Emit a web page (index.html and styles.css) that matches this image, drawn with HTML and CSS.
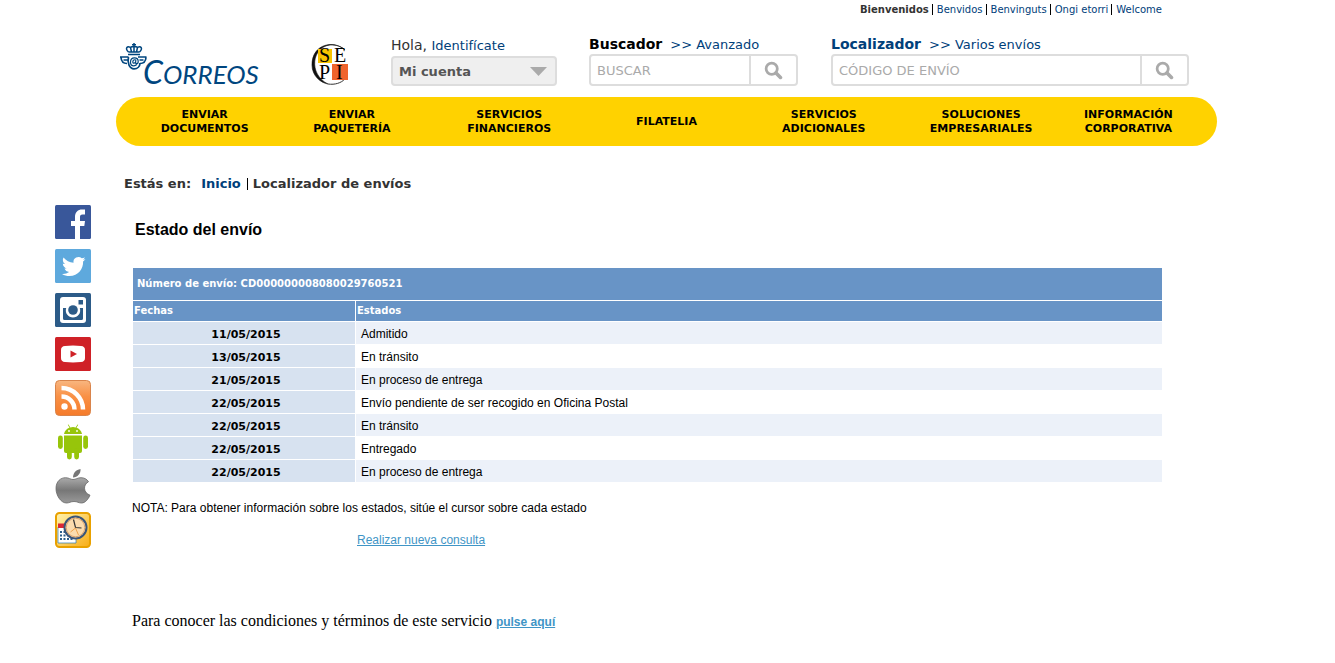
FILE: index.html
```html
<!DOCTYPE html>
<html lang="es">
<head>
<meta charset="utf-8">
<title>Correos - Localizador de envíos</title>
<link rel="stylesheet" href="styles.css">
</head>
<body>
<svg class="sprite" aria-hidden="true">
  <symbol id="magnifier" viewBox="0 0 18 18"><circle cx="7.3" cy="7.3" r="5.3" fill="none" stroke="#aaa" stroke-width="2.6"/><path d="M11.4 11.4l4.2 4.2" stroke="#aaa" stroke-width="3.4" stroke-linecap="round"/></symbol>
</svg>
<div class="page">
  <header class="top">
    <nav class="languages" aria-label="Idiomas">
      <strong>Bienvenidos</strong>
      <a href="#">Benvidos</a>
      <a href="#">Benvinguts</a>
      <a href="#">Ongi etorri</a>
      <a href="#">Welcome</a>
    </nav>
    <div class="tools">
      <a class="logo" href="#" aria-label="Correos">
        <svg width="144" height="52" viewBox="0 0 144 52">
          <g fill="none" stroke="#00467f" stroke-width="1.7">
            <path d="M0 15h8.500M18 15h8.500M1 15.500c.3 3.500 2.500 6 6 6M3.500 18h5M26 15.500c-.3 3.500-2.500 6-6 6M19.500 18h4"/>
            <path d="M8.500 15c-1.500 6 1 11.800 5.500 11.800 3.500 0 6-2.500 6-5.800"/>
            <path d="M16.800 22.500c-1 1-2 1.300-3 1.300-2 0-3.300-1.600-3.300-3.600 0-2.500 1.700-4.300 4-4.300 2.200 0 3.700 1.400 3.700 3.500 0 1.500-.8 2.300-1.700 2.300-1 0-1-1-.7-3.700-1.300-.7-3 .3-3 2 0 1.800 2.300 1.500 3-.2" stroke-width="1.200"/>
            <path d="M8 12.500h12M8.500 10h11M8.500 10C4.500 6 7.500 3.500 10.500 5.500c1.300-1.500 5.700-1.500 7 0 3-2 6 .5 2 4.500M10.500 5.500l1 4.500M14 1v9M17.500 5.500l-1 4.500M12 2.800h4" stroke-width="1.500"/>
          </g>
          <text class="logo-text" x="23" y="42"><tspan class="logo-initial">C</tspan><tspan>ORREOS</tspan></text>
        </svg>
      </a>
      <a class="sepi" href="#" aria-label="SEPI">
        <svg width="42" height="44" viewBox="0 0 42 44">
          <path d="M35 8C25-2 2 1 2 23c0 11 9 18 16 19C-2 32 2 5 20 3c6-.5 11 1.500 15 5z" fill="#111" stroke="#111" stroke-width=".6"/>
          <path d="M18 42c7 1 13-1 17-5" fill="none" stroke="#333" stroke-width="1"/>
          <path fill="#f8c300" d="M8 7h14v14H8z"/><path fill="#f0642d" d="M22 22h16v16H22z"/>
          <g class="sepi-text"><text x="9" y="20">S</text><text x="24" y="20">E</text><text x="9" y="37">P</text><text x="26" y="37">I</text></g>
        </svg>
      </a>
      <div class="account">
        <label class="hello" for="account">Hola, <a href="#">Identifícate</a></label>
        <div class="picker">
          <select id="account"><option>Mi cuenta</option></select>
          <svg width="17" height="9" viewBox="0 0 17 9"><path fill="#aaa" d="M0 0h17L8.500 9z"/></svg>
        </div>
      </div>
      <form class="finder">
        <div class="caption"><label for="search">Buscador</label><a href="#">&gt;&gt; Avanzado</a></div>
        <div class="field"><input id="search" type="text" placeholder="BUSCAR"><button type="button" aria-label="Buscar"><svg width="19" height="19"><use href="#magnifier"/></svg></button></div>
      </form>
      <form class="finder locator">
        <div class="caption"><label for="code">Localizador</label><a href="#">&gt;&gt; Varios envíos</a></div>
        <div class="field"><input id="code" type="text" placeholder="CÓDIGO DE ENVÍO"><button type="button" aria-label="Localizar"><svg width="19" height="19"><use href="#magnifier"/></svg></button></div>
      </form>
    </div>
    <nav class="menu" aria-label="Principal">
      <a href="#">ENVIAR<br>DOCUMENTOS</a>
      <a href="#">ENVIAR<br>PAQUETERÍA</a>
      <a href="#">SERVICIOS<br>FINANCIEROS</a>
      <a href="#">FILATELIA</a>
      <a href="#">SERVICIOS<br>ADICIONALES</a>
      <a href="#">SOLUCIONES<br>EMPRESARIALES</a>
      <a href="#">INFORMACIÓN<br>CORPORATIVA</a>
    </nav>
  </header>

  <aside class="social">
    <a href="#" aria-label="Facebook"><svg viewBox="0 0 36 36"><rect y="1" width="36" height="34" rx="1.500" fill="#39579a"/><path fill="#fff" d="M20 35V22h-4v-5h4v-4c0-5 3-7.500 7-7.500h3v5h-2.500c-2 0-2.500 1-2.500 2.500v4h5l-.7 5H25v13z"/></svg></a>
    <a href="#" aria-label="Twitter"><svg viewBox="0 0 36 36"><rect y="1" width="36" height="34" rx="1.500" fill="#5ea9dd"/><path fill="#fff" d="M30.500 11c-.9.400-1.700.6-2.600.7 1-.6 1.500-1.400 1.900-2.500-.9.500-1.900.9-3 1.100a5 5 0 0 0-8.300 4.400c-4-.2-7.500-2.100-10-5.200-1.300 2.400-.6 5 1.500 6.600-.8 0-1.500-.2-2.200-.6 0 2.300 1.600 4.300 3.900 4.900-.7.200-1.400.2-2.200.1.700 2 2.400 3.300 4.600 3.400A10 10 0 0 1 7 25.900c2.200 1.400 4.700 2.100 7.400 2.100 9 0 14-7.500 13.700-14.500 1-.7 1.800-1.500 2.400-2.500z"/></svg></a>
    <a href="#" aria-label="Instagram"><svg viewBox="0 0 36 36"><rect y="1" width="36" height="34" rx="1.500" fill="#2c5b88"/><rect x="5" y="5" width="26" height="26" rx="3" fill="#fff"/><path fill="#2c5b88" d="M8 16h3.200a7.200 7.200 0 1 0 13.600 0H28v10.500q0 1.500-1.500 1.500h-17Q8 28 8 26.500z"/><circle cx="18" cy="18" r="4.800" fill="#2c5b88"/><path fill="#2c5b88" d="M23.500 8h4.500v4.500h-4.500z"/></svg></a>
    <a href="#" aria-label="YouTube"><svg viewBox="0 0 36 36"><rect y="1" width="36" height="34" rx="1.500" fill="#cf2127"/><path fill="#fff" d="M10 10q8-.8 16 0 4 .3 4 4v8q0 3.700-4 4-8 .8-16 0-4-.3-4-4v-8q0-3.700 4-4z"/><path fill="#cf2127" d="M15.500 14.500v7l6.500-3.500z"/></svg></a>
    <a href="#" aria-label="RSS"><svg viewBox="0 0 36 36"><defs><linearGradient id="orange" x2="0" y2="1"><stop stop-color="#f8b680"/><stop offset=".45" stop-color="#f99146"/><stop offset="1" stop-color="#f57b2a"/></linearGradient></defs><rect x=".5" y=".5" width="35" height="35" rx="4" fill="url(#orange)" stroke="#d9844b"/><circle cx="9.500" cy="26.500" r="3.200" fill="#fff"/><path d="M6.500 16.500A13 13 0 0 1 19.500 29.500M6.500 8A21.500 21.500 0 0 1 28 29.500" fill="none" stroke="#fff" stroke-width="4.500"/></svg></a>
    <a href="#" aria-label="Android"><svg viewBox="0 0 36 36"><g fill="#97c50a"><path d="M9 10c.5-3.500 3-5.500 5.500-6.300L12.800.8l.7-.4 1.800 3q2.700-.8 5.400 0l1.800-3 .7.400-1.700 2.900C24 4.500 26.500 6.500 27 10z"/><path d="M9 11.500h18v15.500q0 2-2 2H11q-2 0-2-2z"/><rect x="3" y="11.500" width="4.800" height="13.500" rx="2.400"/><rect x="28.200" y="11.500" width="4.800" height="13.500" rx="2.400"/><rect x="12" y="24" width="4.800" height="11.500" rx="2.400"/><rect x="19.200" y="24" width="4.800" height="11.500" rx="2.400"/></g><g fill="#fff"><circle cx="14" cy="7" r=".9"/><circle cx="22" cy="7" r=".9"/></g></svg></a>
    <a href="#" aria-label="Apple"><svg viewBox="0 0 36 36"><defs><linearGradient id="steel" x2="0" y2="1"><stop stop-color="#aaa"/><stop offset=".5" stop-color="#777"/><stop offset="1" stop-color="#999"/></linearGradient></defs><path fill="url(#steel)" stroke="#666" stroke-width=".8" d="M18 11.500c3 0 4.500-1.800 8-1.800 3.500 0 6 1.600 7.500 4-6 3.500-5 11 1.500 13.500-2 4.500-5 7.800-8.500 7.800-3 0-4-1.500-7.500-1.500s-4.700 1.500-7.500 1.500C6 35 1 27.500 1 20.500 1 13 6 9.700 10.500 9.700c3.500 0 5 1.800 7.500 1.800z"/><path fill="#777" d="M18 9.500c0-4.500 3-7.700 7.500-8.500.5 4.500-3 8.300-7.500 8.500z"/></svg></a>
    <a href="#" aria-label="Cita previa"><svg viewBox="0 0 36 36"><defs><linearGradient id="gold" x2="1" y2="1"><stop stop-color="#fff3ae"/><stop offset="1" stop-color="#f8ad16"/></linearGradient></defs><rect x="1" y="1" width="34" height="34" rx="3.500" fill="url(#gold)" stroke="#e9a100" stroke-width="2"/><path fill="#fff" stroke="#2979b4" stroke-width=".7" d="M3 15h18v16H3z"/><path fill="#dd2834" d="M3 11.500h8V16H3z"/><path d="M5 20h13M5 23.500h14M5 27h14" stroke="#2c5e8b" stroke-width="2" stroke-dasharray="2 1.500"/><circle cx="20.500" cy="15.500" r="11" fill="#fbdcae" stroke="#3b5578" stroke-width="2"/><circle cx="20.500" cy="15.500" r="9.300" fill="none" stroke="#d9a26d"/><path d="M18.500 7.500l2 8 6 .5" fill="none" stroke="#333" stroke-width="1.200"/><path d="M20.500 16l-5 4M20.500 16l3 7" stroke="#efa34c"/></svg></a>
  </aside>

  <main>
    <div class="crumbs"><span>Estás en:</span><a href="#">Inicio</a><span class="current">Localizador de envíos</span></div>
    <h1>Estado del envío</h1>
    <table>
      <thead>
        <tr class="number"><th colspan="2">Número de envío: CD000000008080029760521</th></tr>
        <tr class="columns"><th scope="col">Fechas</th><th scope="col">Estados</th></tr>
      </thead>
      <tbody>
        <tr><th scope="row">11/05/2015</th><td>Admitido</td></tr>
        <tr><th scope="row">13/05/2015</th><td>En tránsito</td></tr>
        <tr><th scope="row">21/05/2015</th><td>En proceso de entrega</td></tr>
        <tr><th scope="row">22/05/2015</th><td>Envío pendiente de ser recogido en Oficina Postal</td></tr>
        <tr><th scope="row">22/05/2015</th><td>En tránsito</td></tr>
        <tr><th scope="row">22/05/2015</th><td>Entregado</td></tr>
        <tr><th scope="row">22/05/2015</th><td>En proceso de entrega</td></tr>
      </tbody>
    </table>
    <p class="note">NOTA: Para obtener información sobre los estados, sitúe el cursor sobre cada estado</p>
    <p class="again"><a href="#">Realizar nueva consulta</a></p>
    <p class="terms">Para conocer las condiciones y términos de este servicio <a href="#">pulse aquí</a></p>
  </main>
</div>
</body>
</html>
```
FILE: styles.css
```css
* { box-sizing: border-box; }
body {
  margin: 0;
  background: #fff;
  color: #000;
  font: 13px/16px Verdana, "DejaVu Sans", sans-serif;
}
a { color: #00407a; text-decoration: none; }
.sprite { display: none; }

.page {
  display: grid;
  grid-template-columns: 116px minmax(0, 1fr);
  padding-right: 118px;
}
.top { grid-column: 2; }

.languages {
  display: flex;
  justify-content: flex-end;
  padding: 4px 55px 0 0;
  font-size: 10px;
  line-height: 11px;
}
.languages strong { color: #333; }
.languages a { margin-left: 3px; padding-left: 4px; border-left: 1px solid #000; }

.tools {
  display: grid;
  grid-template-columns: 190px 81px 198px 242px minmax(0, 1fr);
  align-items: end;
  padding: 20px 28px 11px 4px;
}
.tools svg { display: block; }
.logo { margin-bottom: -8px; }
.logo-text {
  fill: #00467f;
  font-family: Lato, sans-serif;
  font-style: italic;
  font-size: 26px;
}
.logo-initial { font-size: 32px; }
.sepi-text { font: 20px "Liberation Serif", serif; }
.hello { display: block; font-size: 14px; line-height: 20px; color: #333; }
.hello a { font-size: 13px; }
.account { width: 166px; }
.picker { display: grid; align-items: center; }
.picker select, .picker svg { grid-area: 1 / 1; }
.picker svg { justify-self: end; margin-right: 10px; pointer-events: none; }
.picker select {
  appearance: none;
  height: 30px;
  padding: 0 6px;
  border: 2px solid #ddd;
  border-radius: 4px;
  background: #efefef;
  color: #555;
  font: bold 13px Verdana, "DejaVu Sans", sans-serif;
}
.finder { width: 209px; }
.locator { width: auto; }
.caption { display: flex; align-items: baseline; gap: 8px; line-height: 18px; }
.caption label { font-size: 14px; font-weight: bold; }
.locator label { color: #00407a; }
.field { display: flex; height: 32px; border: 2px solid #ddd; border-radius: 4px; }
.field input {
  flex: 1;
  min-width: 0;
  padding: 0 6px;
  border: 0;
  background: none;
  font: 13px Verdana, "DejaVu Sans", sans-serif;
}
.field input::placeholder { color: #aaa; }
.field button {
  display: grid;
  place-items: center;
  width: 47px;
  padding: 0;
  border: 0;
  border-left: 2px solid #ddd;
  background: none;
}

.menu {
  display: flex;
  align-items: center;
  height: 49px;
  padding: 0 20px;
  border-radius: 25px;
  background: #ffd200;
  font-size: 11px;
  line-height: 14px;
  font-weight: bold;
  text-align: center;
}
.menu a { flex: 157; color: #000; }
.menu a:first-child, .menu a:last-child { flex: 137; }

.social {
  display: flex;
  flex-direction: column;
  gap: 8px;
  padding: 58px 0 0 55px;
}
.social a, .social svg { display: block; width: 36px; height: 36px; }

main { padding: 30px 54px 0 16px; font-family: Arial, "Liberation Sans", sans-serif; }
.crumbs {
  display: flex;
  margin-left: -8px;
  font: bold 13px/16px Verdana, "DejaVu Sans", sans-serif;
  color: #333;
}
.crumbs a { margin: 0 6px 0 10px; }
.crumbs .current { display: flex; align-items: center; gap: 5px; }
.crumbs .current::before { content: ""; height: 12px; border-left: 1px solid #000; }
h1 { margin: 28px 0 27px 3px; font-size: 16px; line-height: 20px; }

table {
  width: 100%;
  border-collapse: separate;
  border-spacing: 1px;
  font-size: 12px;
  line-height: 14px;
}
th { padding: 0; font-family: Verdana, "DejaVu Sans", sans-serif; font-size: 11px; }
thead th { background: #6894c6; color: #fff; text-align: left; font-size: 10px; }
.number th { height: 32px; padding-left: 4px; }
.columns th { height: 20px; padding-left: 1px; }
.columns th:first-child { width: 222px; }
tbody th { height: 22px; padding: 4px 0 0 4px; background: #d7e2f0; }
td { padding: 2px 5px 0; }
tbody tr:nth-child(odd) td { background: #ecf1f9; }

p { margin: 0; }
.note { margin-top: 18px; font-size: 12px; line-height: 14px; }
.again { margin: 18px 0 0 225px; font-size: 12px; line-height: 14px; }
.again a, .terms a { color: #3f95c6; text-decoration: underline; }
.terms { margin-top: 65px; font: 16px/18px "Times New Roman", "Liberation Serif", serif; }
.terms a { font: bold 12px Arial, "Liberation Sans", sans-serif; }
```
